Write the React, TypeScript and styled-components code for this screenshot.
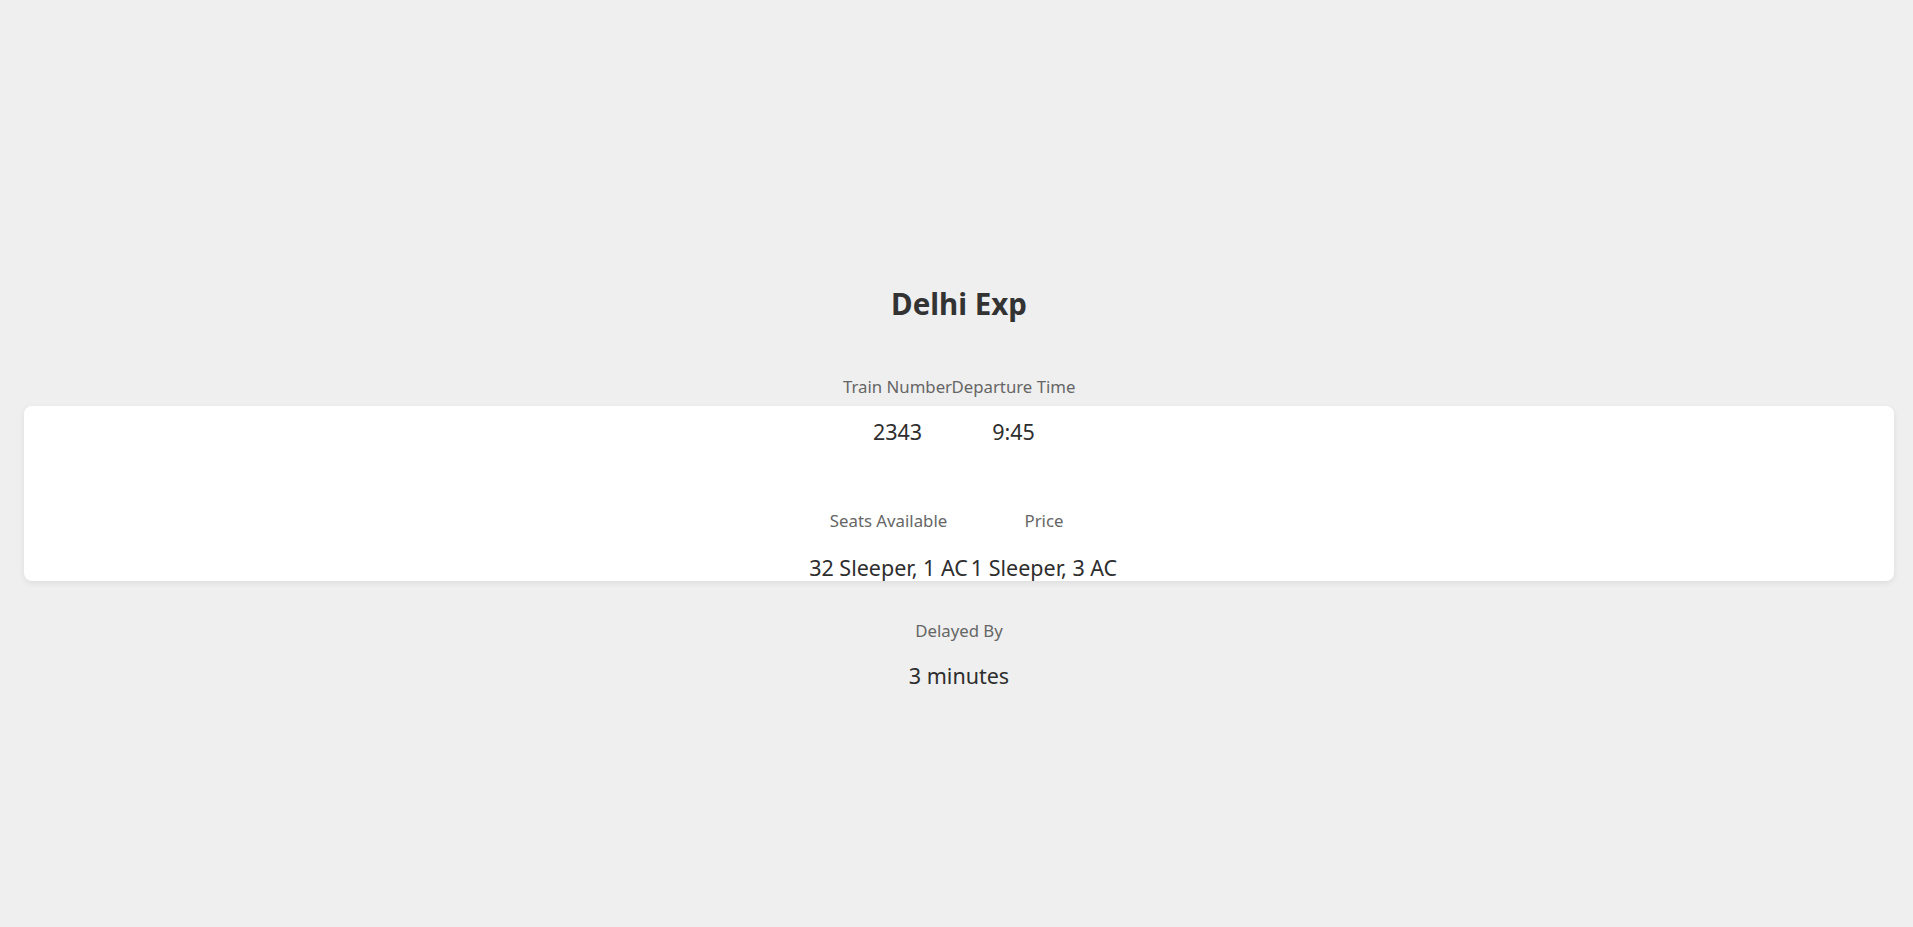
import React from "react";
import styled, { createGlobalStyle } from "styled-components";

const GlobalStyle = createGlobalStyle`
  body {
    margin: 0;
    background: #efefef;
    font-family: "Noto Sans", "Open Sans", sans-serif;
    color: #333;
  }
`;

const Page = styled.div`
  display: flex;
  flex-direction: column;
  align-items: center;
  padding: 285px 19px 0 24px;
  min-height: 100vh;
  box-sizing: border-box;
`;

const Title = styled.h1`
  margin: 0;
  font-size: 29.5px;
  line-height: 38px;
  font-weight: 700;
  color: #333;
`;

const Row = styled.div<{ $gap?: number }>`
  display: flex;
  justify-content: center;
  margin-top: ${({ $gap }) => $gap ?? 0}px;
`;

const Cell = styled.div<{ $width: number }>`
  width: ${({ $width }) => $width}px;
  display: flex;
  justify-content: center;
  white-space: nowrap;
`;

const Label = styled.span`
  font-size: 16.8px;
  line-height: 22px;
  color: #666;
`;

const Value = styled.span`
  font-size: 21.5px;
  line-height: 28px;
  color: #2e2e2e;
`;

const Card = styled.div`
  align-self: stretch;
  margin-top: 8px;
  padding-top: 12px;
  height: 175px;
  box-sizing: border-box;
  background: #fff;
  border-radius: 8px;
  box-shadow: 0 2px 6px rgba(0, 0, 0, 0.08);
  display: flex;
  flex-direction: column;
  align-items: center;
  overflow: hidden;
`;

const Field = styled.div<{ $gap: number }>`
  display: flex;
  flex-direction: column;
  align-items: center;
  gap: 20px;
  margin-top: ${({ $gap }) => $gap}px;
`;

const top = [
  { label: "Train Number", value: "2343", width: 109 },
  { label: "Departure Time", value: "9:45", width: 123 },
];

const bottom = [
  { label: "Seats Available", value: "32 Sleeper, 1 AC", width: 170 },
  { label: "Price", value: "1 Sleeper, 3 AC", width: 141 },
];

export default function App() {
  return (
    <>
      <GlobalStyle />
      <Page>
        <Title>Delhi Exp</Title>
        <Row $gap={53}>
          {top.map((c) => (
            <Cell key={c.label} $width={c.width}>
              <Label>{c.label}</Label>
            </Cell>
          ))}
        </Row>
        <Card>
          <Row>
            {top.map((c) => (
              <Cell key={c.label} $width={c.width}>
                <Value>{c.value}</Value>
              </Cell>
            ))}
          </Row>
          <Row $gap={64}>
            {bottom.map((c) => (
              <Cell key={c.label} $width={c.width}>
                <Label>{c.label}</Label>
              </Cell>
            ))}
          </Row>
          <Row $gap={22}>
            {bottom.map((c) => (
              <Cell key={c.label} $width={c.width}>
                <Value>{c.value}</Value>
              </Cell>
            ))}
          </Row>
        </Card>
        <Field $gap={39}>
          <Label>Delayed By</Label>
          <Value>3 minutes</Value>
        </Field>
      </Page>
    </>
  );
}
